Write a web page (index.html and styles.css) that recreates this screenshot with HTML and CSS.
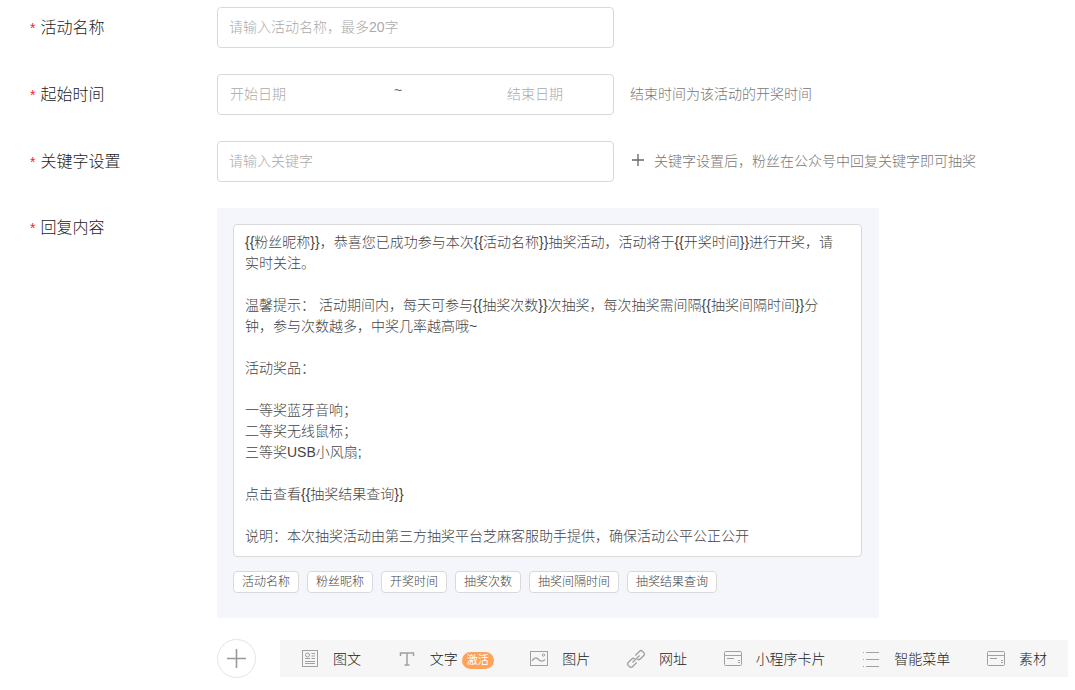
FILE: index.html
```html
<!DOCTYPE html>
<html lang="zh-CN">
<head>
    <meta charset="UTF-8">
    <meta name="viewport" content="width=device-width, initial-scale=1.0">
    <title>抽奖活动设置</title>
    <link rel="stylesheet" href="styles.css">
</head>
<body>
    <form class="activity-form">
        <div class="form-row">
            <label class="form-label" for="activity-name"><span class="required">*</span>活动名称</label>
            <input class="text-input" type="text" id="activity-name" placeholder="请输入活动名称，最多20字">
        </div>

        <div class="form-row">
            <label class="form-label" for="start-date"><span class="required">*</span>起始时间</label>
            <div class="date-range">
                <input class="date-input" type="text" id="start-date" placeholder="开始日期">
                <span class="separator">~</span>
                <input class="date-input date-end" type="text" id="end-date" aria-label="结束日期" placeholder="结束日期">
            </div>
            <span class="hint">结束时间为该活动的开奖时间</span>
        </div>

        <div class="form-row">
            <label class="form-label" for="keyword"><span class="required">*</span>关键字设置</label>
            <input class="text-input" type="text" id="keyword" placeholder="请输入关键字">
            <button class="add-keyword" type="button" aria-label="添加关键字">
                <svg width="14" height="14" viewBox="0 0 14 14"><path d="M7 1v12M1 7h12" fill="none" stroke="#666" stroke-width="1.3"/></svg>
            </button>
            <span class="hint keyword-hint">关键字设置后，粉丝在公众号中回复关键字即可抽奖</span>
        </div>

        <div class="form-row reply-row">
            <label class="form-label" for="reply"><span class="required">*</span>回复内容</label>
            <div class="reply-panel">
                <textarea class="reply-text" id="reply" rows="15" spellcheck="false">{{粉丝昵称}}，恭喜您已成功参与本次{{活动名称}}抽奖活动，活动将于{{开奖时间}}进行开奖，请实时关注。

温馨提示： 活动期间内，每天可参与{{抽奖次数}}次抽奖，每次抽奖需间隔{{抽奖间隔时间}}分钟，参与次数越多，中奖几率越高哦~

活动奖品：

一等奖蓝牙音响；
二等奖无线鼠标；
三等奖USB小风扇;

点击查看{{抽奖结果查询}}

说明：本次抽奖活动由第三方抽奖平台芝麻客服助手提供，确保活动公平公正公开</textarea>
                <div class="tags">
                    <button class="tag" type="button">活动名称</button>
                    <button class="tag" type="button">粉丝昵称</button>
                    <button class="tag" type="button">开奖时间</button>
                    <button class="tag" type="button">抽奖次数</button>
                    <button class="tag" type="button">抽奖间隔时间</button>
                    <button class="tag" type="button">抽奖结果查询</button>
                </div>
            </div>
        </div>

        <div class="add-row">
            <button class="add-button" type="button" aria-label="添加内容">
                <svg width="19" height="19" viewBox="0 0 19 19"><path d="M9.5 0v19M0 9.5h19" fill="none" stroke="#999" stroke-width="1.6"/></svg>
            </button>
            <div class="toolbar">
                <button class="tool" type="button">
                    <svg class="icon" viewBox="0 0 20 20">
                        <rect x="2.5" y="2.5" width="15" height="16"/>
                        <circle cx="7.5" cy="7" r="2"/>
                        <path d="M5 10.5h5M11.5 5.5H15M11.5 8H15M11.5 10.5H15M5 13.500h10M5 15.500h10"/>
                    </svg>
                    图文
                </button>
                <button class="tool" type="button">
                    <svg class="icon" viewBox="0 0 20 20">
                        <path d="M3.5 8V5h13v3M10 5v12M7.5 17h5" stroke-width="1.5"/>
                    </svg>
                    <span>文字<span class="badge">激活</span></span>
                </button>
                <button class="tool" type="button">
                    <svg class="icon" viewBox="0 0 20 20">
                        <rect x="1.5" y="3.5" width="17" height="14"/>
                        <circle cx="14.5" cy="7" r="1.2"/>
                        <path d="M3 13c2-3 4-4 6-2s4 3.5 7 .5" stroke-width="1.3"/>
                    </svg>
                    图片
                </button>
                <button class="tool" type="button">
                    <svg class="icon" viewBox="0 0 20 20">
                        <g transform="rotate(-45 10 11)" stroke-width="1.3">
                            <path d="M8 14H2a2 2 0 0 1-2-2v-2a2 2 0 0 1 2-2h5a2 2 0 0 1 2 2"/>
                            <path d="M12 8h6a2 2 0 0 1 2 2v2a2 2 0 0 1-2 2h-5a2 2 0 0 1-2-2"/>
                            <path d="M5 11h10"/>
                        </g>
                    </svg>
                    网址
                </button>
                <button class="tool" type="button">
                    <svg class="icon" viewBox="0 0 20 20">
                        <rect x="1.5" y="3.5" width="17" height="14" rx="1"/>
                        <path d="M2 7.500h16M4 10.500h7M15 12.500h2M15 14.500h2"/>
                    </svg>
                    小程序卡片
                </button>
                <button class="tool" type="button">
                    <svg class="icon" viewBox="0 0 20 20">
                        <path d="M2 4.500h1M5 4.500h13M2 11.500h1M5 11.500h13M2 18.500h1M5 18.500h13"/>
                    </svg>
                    智能菜单
                </button>
                <button class="tool" type="button">
                    <svg class="icon" viewBox="0 0 20 20">
                        <rect x="1.5" y="3.5" width="17" height="14" rx="1"/>
                        <path d="M2 7.500h16M4 10.500h7M15 12.500h2M15 14.500h2"/>
                    </svg>
                    素材
                </button>
            </div>
        </div>
    </form>
</body>
</html>
```
FILE: styles.css
```css
* {
    box-sizing: border-box;
}
body {
    margin: 0;
    background-color: #fff;
    color: #222;
    font-family: "Liberation Sans", "Noto Sans CJK SC", sans-serif;
    font-size: 14px;
    font-weight: 300;
}
button, input, textarea {
    font: inherit;
    color: inherit;
}
button {
    padding: 0;
    border: none;
    background: none;
    cursor: pointer;
}
svg {
    display: block;
}
.activity-form {
    padding: 7px 7px 12px 30px;
}
.form-row {
    display: flex;
    align-items: center;
    margin-bottom: 26px;
}
.form-label {
    display: flex;
    flex: none;
    align-items: center;
    gap: 5px;
    width: 187px;
    font-size: 16px;
    line-height: 40px;
}
.required {
    color: #f5222d;
    font-size: 14px;
}
.text-input, .date-range {
    width: 397px;
    height: 41px;
    border: 1px solid #d9d9d9;
    border-radius: 4px;
    background: #fff;
}
.text-input {
    padding: 0 11px 2px;
}
.date-range {
    display: flex;
    align-items: center;
    padding: 0 12px 2px;
}
.date-input {
    width: 164px;
    padding: 0;
    border: none;
    background: none;
}
.date-end {
    width: 94px;
    margin-left: auto;
}
.separator {
    padding-bottom: 8px;
    color: #666;
}
.text-input::placeholder, .date-input::placeholder {
    color: #aaa;
    opacity: 1;
}
.hint {
    margin-left: 16px;
    padding-bottom: 4px;
    color: #777;
}
.add-keyword {
    margin-left: 17px;
    padding-bottom: 4px;
}
.keyword-hint {
    margin-left: 9px;
}
.reply-row {
    align-items: flex-start;
    margin-bottom: 21px;
}
.reply-panel {
    width: 662px;
    padding: 16px 17px 25px 16px;
    background: #f5f6fb;
}
.reply-text {
    display: block;
    width: 100%;
    padding: 7px 24px 9px 11px;
    border: 1px solid #d9d9d9;
    border-radius: 4px;
    background: #fff;
    color: #444;
    line-height: 21px;
    resize: none;
    overflow: hidden;
}
.tags {
    display: flex;
    flex-wrap: wrap;
    gap: 8px;
    margin-top: 14px;
}
.tag {
    height: 22px;
    padding: 0 8px;
    border: 1px solid #d9d9d9;
    border-radius: 4px;
    background: #fff;
    color: #444;
    font-size: 12px;
    line-height: 18px;
}
.add-row {
    display: flex;
    align-items: center;
    gap: 24px;
    padding-left: 187px;
}
.add-button {
    display: flex;
    flex: none;
    align-items: center;
    justify-content: center;
    width: 39px;
    height: 39px;
    border: 1px solid #e4e4e4;
    border-radius: 50%;
}
.toolbar {
    display: flex;
    flex: 1;
    align-items: center;
    justify-content: space-between;
    height: 37px;
    padding: 0 21px 1px 20px;
    background: #f6f6f6;
}
.tool {
    display: flex;
    align-items: center;
    gap: 13px;
    white-space: nowrap;
}
.icon {
    width: 20px;
    height: 20px;
    fill: none;
    stroke: #a0a0a0;
    stroke-width: 1;
}
.badge {
    display: inline-block;
    margin-left: 4px;
    padding: 0 5px;
    border-radius: 9px;
    background: #ffa25c;
    color: #fff;
    font-size: 11px;
    font-weight: 400;
    line-height: 17px;
}
```
